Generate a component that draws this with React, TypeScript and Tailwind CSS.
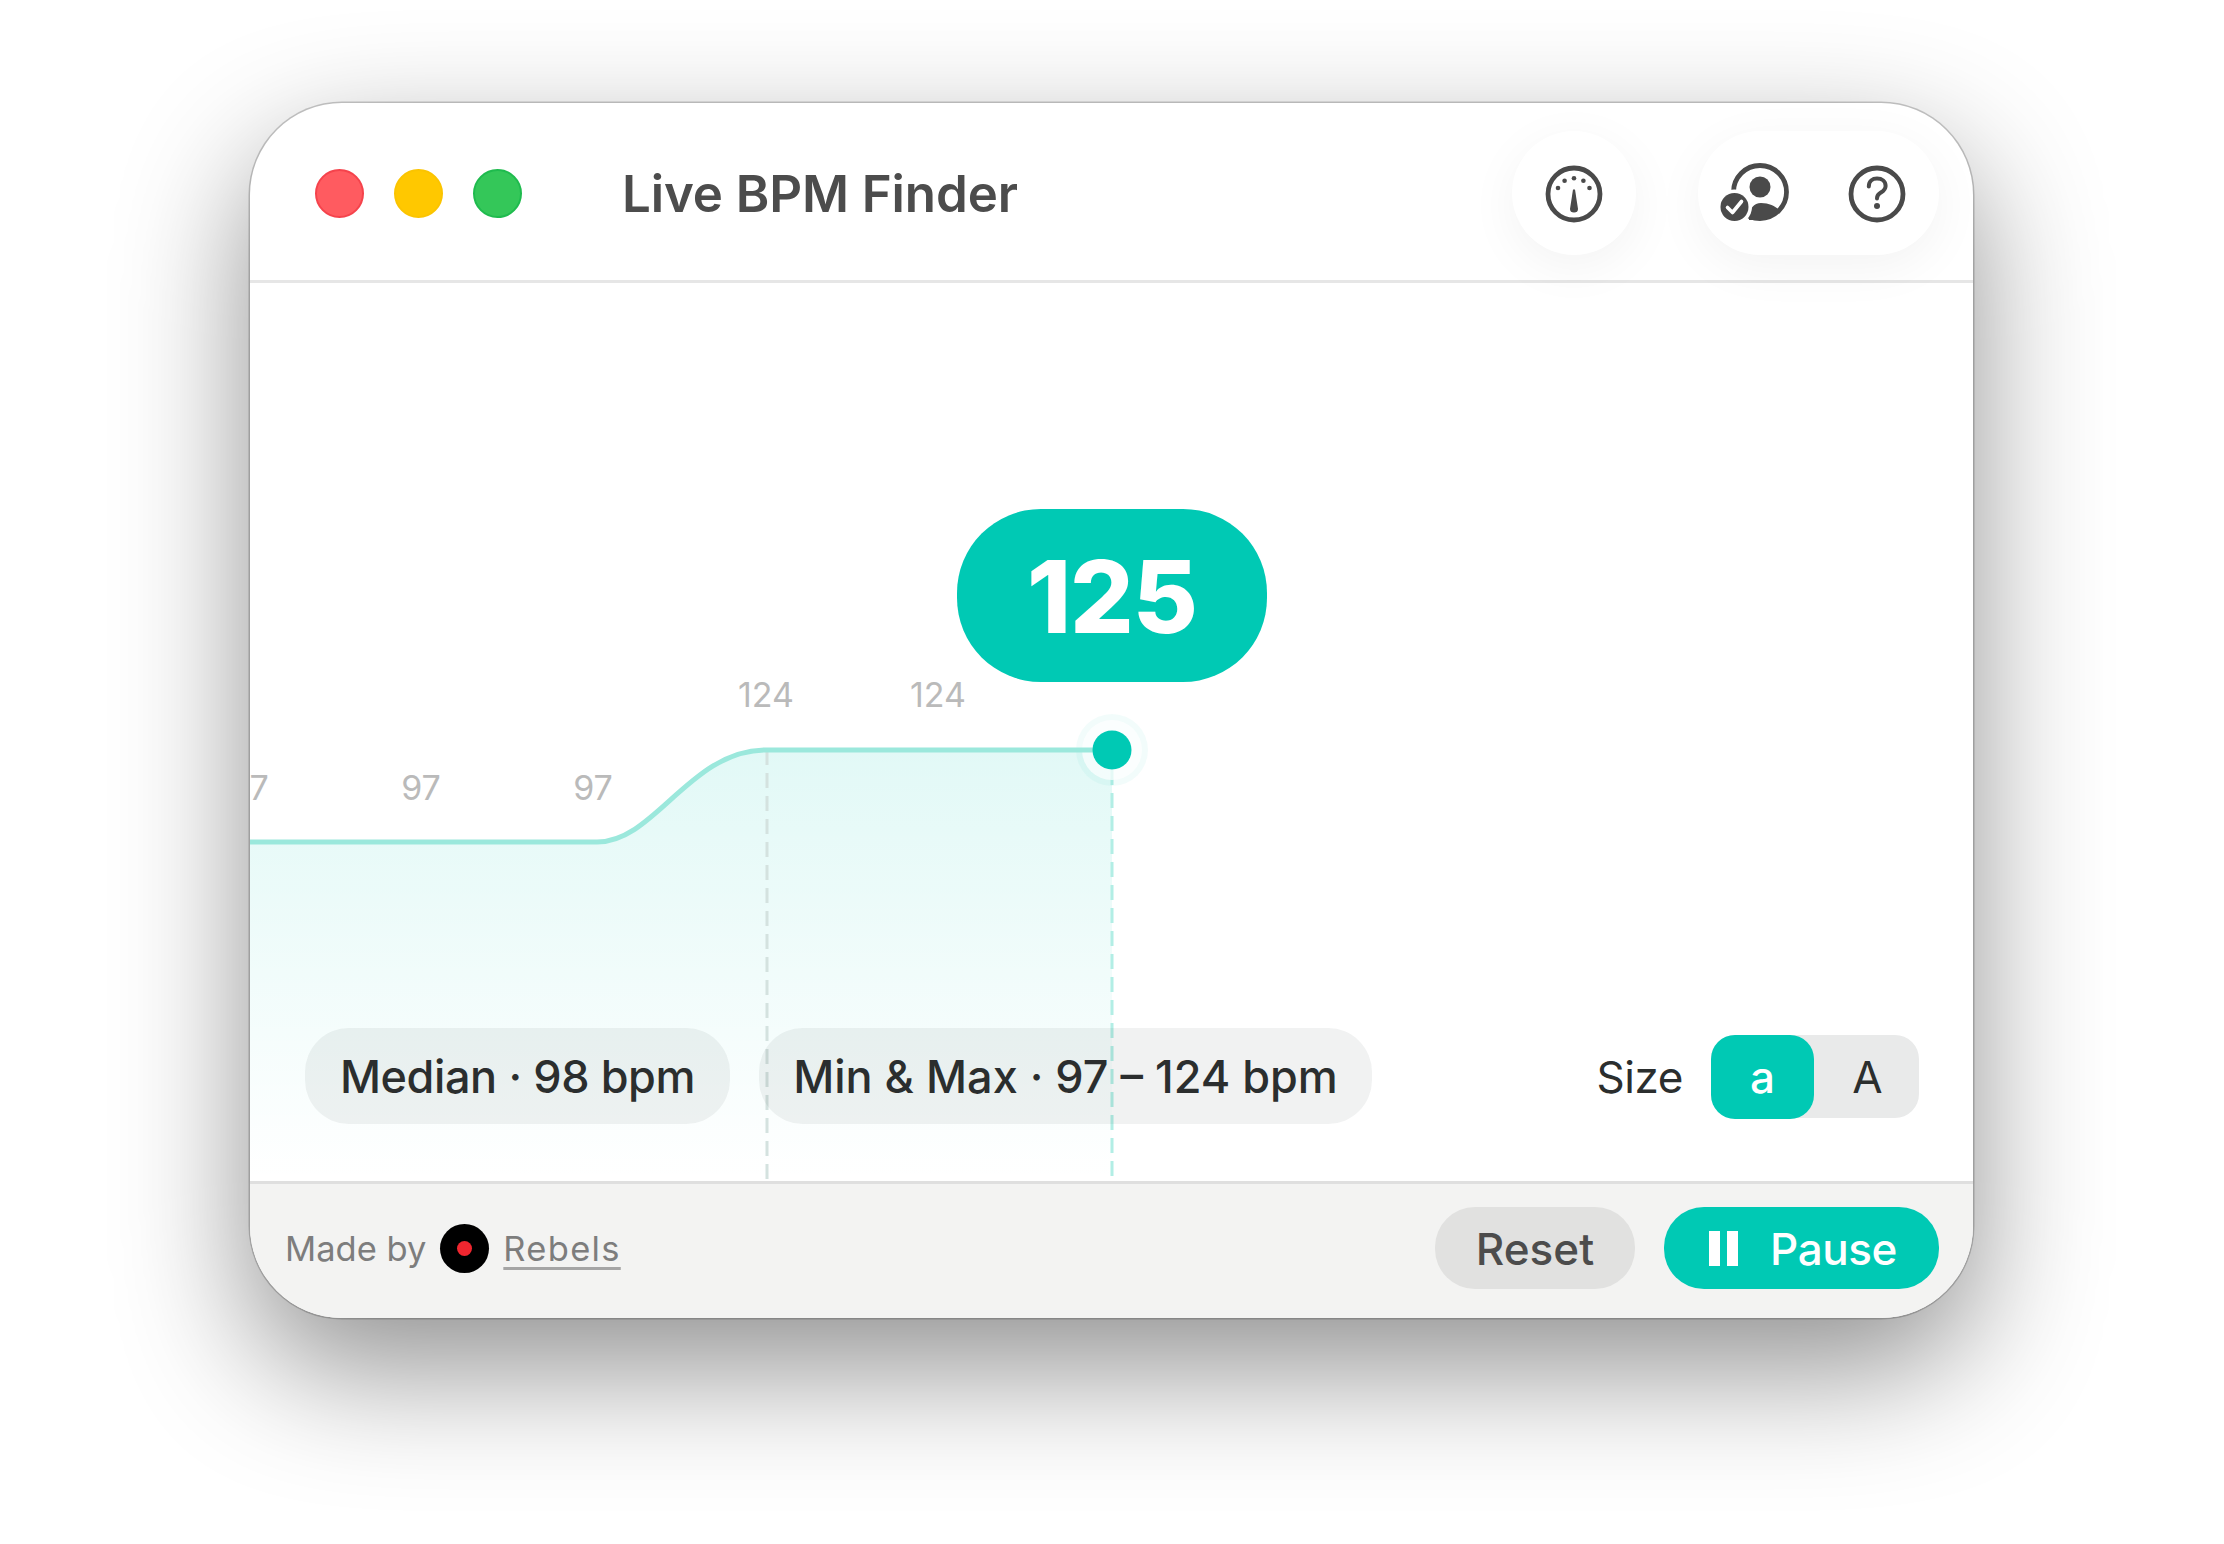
export default function App() {
  return (
    <div className="min-h-[1544px] w-[2224px] bg-white pt-[103px] pl-[250px] overflow-hidden" style={{ fontFamily: "Inter, 'Noto Sans', sans-serif" }}>
      <div className="flex h-[1215px] w-[1723px] flex-col overflow-hidden rounded-[92px] bg-white shadow-[0_0_0_1.5px_rgba(0,0,0,0.2),0_50px_130px_rgba(0,0,0,0.44)]">
        <header className="relative z-10 flex h-[180px] shrink-0 items-center border-b-[3px] border-[#e6e6e6] pt-[3px] pl-[65px] pr-[34px]">
          <div className="flex gap-[30px]">
            <span className="h-[49px] w-[49px] rounded-full border-2 border-[#f5434c] bg-[#ff5b60]" />
            <span className="h-[49px] w-[49px] rounded-full border-2 border-[#fbc400] bg-[#ffc800]" />
            <span className="h-[49px] w-[49px] rounded-full border-2 border-[#1fbb4e] bg-[#34c759]" />
          </div>
          <h1 className="ml-[100px] pt-[2px] text-[51px] font-semibold tracking-[-0.1px] text-[#4c4c4c]">Live BPM Finder</h1>
          <div className="ml-auto flex items-center gap-[62px]">
            <div className="flex h-[124px] w-[124px] items-center justify-center rounded-full bg-white pt-[1px] pr-[1px] shadow-[0_12px_50px_rgba(0,0,0,0.05)]">
              <svg width="62" height="62" viewBox="-31 -31 62 62">
                <circle r="26" fill="none" stroke="#4a4a4a" strokeWidth="4.8" />
                <g fill="#4a4a4a">
                  <circle cx="-16" cy="-6" r="2.3" />
                  <circle cx="-9.4" cy="-13.3" r="2.3" />
                  <circle cx="0" cy="-15.7" r="2.3" />
                  <circle cx="9.4" cy="-13.3" r="2.3" />
                  <circle cx="15.5" cy="-6" r="2.3" />
                  <path d="M-1 -4.5 L1 -4.5 L4 15 A4 3.6 0 0 1 -4 15 Z" />
                </g>
              </svg>
            </div>
            <div className="flex h-[124px] w-[241px] items-center gap-[51px] rounded-full bg-white pl-[21px] pt-[1px] shadow-[0_12px_50px_rgba(0,0,0,0.05)]">
              <svg width="76" height="72" viewBox="0 0 76 72">
                <circle cx="41" cy="34" r="26.5" fill="none" stroke="#4a4a4a" strokeWidth="4.8" />
                <circle cx="41" cy="29" r="10.5" fill="#4a4a4a" />
                <path d="M30 62 C30 50 35 45 42 45 C50 45 56 48 60 52 C55 58 49 62 41 62 Z" fill="#4a4a4a" />
                <circle cx="15.5" cy="49" r="17.5" fill="#ffffff" />
                <circle cx="15.5" cy="49" r="14" fill="#4a4a4a" />
                <path d="M8.5 49.5 L13.5 54.5 L22.5 43.5" fill="none" stroke="#ffffff" strokeWidth="3.6" strokeLinecap="round" strokeLinejoin="round" />
              </svg>
              <svg width="62" height="62" viewBox="-31 -31 62 62">
                <circle r="26" fill="none" stroke="#4a4a4a" strokeWidth="4.8" />
                <path d="M-8.2 -7.5 C-8.2 -13 -4.4 -15.4 0 -15.4 C5 -15.4 8.6 -12.6 8.6 -8 C8.6 -3.5 4.8 -2.2 2.4 -0.4 C0.8 0.8 0 2 0 4.6" fill="none" stroke="#4a4a4a" strokeWidth="4" strokeLinecap="round" />
                <circle cx="0" cy="12" r="3" fill="#4a4a4a" />
              </svg>
            </div>
          </div>
        </header>

        <main className="relative flex flex-1 items-end justify-between pb-[57px] pl-[55px] pr-[54px]">
          <svg className="absolute inset-0" width="1723" height="898" viewBox="250 283 1723 898" style={{ fontFamily: "Inter, sans-serif" }}>
            <defs>
              <linearGradient id="fill" x1="0" y1="750" x2="0" y2="1181" gradientUnits="userSpaceOnUse">
                <stop offset="0" stopColor="#00c9b4" stopOpacity="0.115" />
                <stop offset="1" stopColor="#00c9b4" stopOpacity="0" />
              </linearGradient>
            </defs>
            <path d="M250 842 L597 842 C655 842 690 750 766 750 L1112 750 L1112 1181 L250 1181 Z" fill="url(#fill)" />
            <path d="M767 750 V1181" stroke="#d4e2df" strokeWidth="3" strokeDasharray="15 8" />
            <path d="M1112 770 V1181" stroke="#b2eee5" strokeWidth="3" strokeDasharray="15 8" />
            <circle cx="1112" cy="750" r="36" fill="#00c9b4" opacity="0.05" />
            <circle cx="1112" cy="750" r="30" fill="#ffffff" opacity="0.7" />
            <path d="M250 842 L597 842 C655 842 690 750 766 750 L1112 750" fill="none" stroke="#9be8dc" strokeWidth="5" />
            <circle cx="1112" cy="750" r="19.5" fill="#00c9b4" />
            <g fontSize="34" fill="#bababa" textAnchor="middle">
              <text x="766" y="707">124</text>
              <text x="938" y="707">124</text>
              <text x="249" y="800">97</text>
              <text x="421" y="800">97</text>
              <text x="593" y="800">97</text>
            </g>
          </svg>

          <div className="absolute left-[707px] top-[226px] flex h-[173px] w-[310px] items-center justify-center rounded-[84px] bg-[#00c9b4] pt-[2px] text-[100px] font-extrabold tracking-[-1px] text-white">
            125
          </div>

          <div className="relative flex gap-[29px]">
            <div className="flex h-[96px] w-[425px] items-center justify-center rounded-[44px] bg-[rgba(20,30,30,0.06)] pt-[2px] text-[45px] font-medium tracking-[-0.4px] text-[#2b2e2e]">
              Median · 98 bpm
            </div>
            <div className="flex h-[96px] w-[613px] items-center justify-center rounded-[44px] bg-[rgba(20,30,30,0.06)] pt-[2px] text-[45px] font-medium text-[#2b2e2e]">
              Min &amp; Max · 97 – 124 bpm
            </div>
          </div>

          <div className="relative flex h-[96px] items-center gap-[28px]">
            <span className="pt-[2px] text-[44px] tracking-[-0.4px] text-[#2b2e2e]">Size</span>
            <div className="flex h-[83px] w-[208px] rounded-[24px] bg-[#e9eaea]">
              <div className="flex h-[84px] w-[103px] items-center justify-center rounded-[24px] bg-[#00c9b4] pt-[1px] text-[44px] font-medium text-white">a</div>
              <div className="flex flex-1 items-center justify-center pt-[1px] pl-[2px] text-[44px] text-[#2b2e2e]">A</div>
            </div>
          </div>
        </main>

        <footer className="flex h-[137px] shrink-0 items-center border-t-[3px] border-[#dfdfdf] bg-[#f3f3f2] pb-[6px] pl-[35px] pr-[34px]">
          <span className="pt-[2px] text-[34.5px] tracking-[0px] text-[#7d7d7d]">Made by</span>
          <span className="ml-[14px] flex h-[49px] w-[49px] items-center justify-center rounded-full bg-black">
            <span className="h-[15px] w-[15px] rounded-full bg-[#f0262f]" />
          </span>
          <span className="ml-[14px] pt-[2px] text-[34.5px] tracking-[1.3px] text-[#7d7d7d] underline decoration-[3px] underline-offset-[6px] decoration-[#a5a5a5]">Rebels</span>
          <div className="ml-auto flex gap-[29px]">
            <button className="flex h-[82px] w-[200px] items-center justify-center rounded-[40px] bg-[#e1e1e0] pt-[2px] text-[44px] font-medium text-[#4c4c4c]">Reset</button>
            <button className="flex h-[82px] w-[275px] items-center gap-[32px] rounded-[40px] bg-[#00c9b4] pl-[45px] text-[44px] font-medium text-white">
              <span className="flex gap-[7px]">
                <span className="h-[35px] w-[11px] bg-white" />
                <span className="h-[35px] w-[11px] bg-white" />
              </span>
              <span className="pt-[2px] tracking-[-0.4px]">Pause</span>
            </button>
          </div>
        </footer>
      </div>
    </div>
  );
}
